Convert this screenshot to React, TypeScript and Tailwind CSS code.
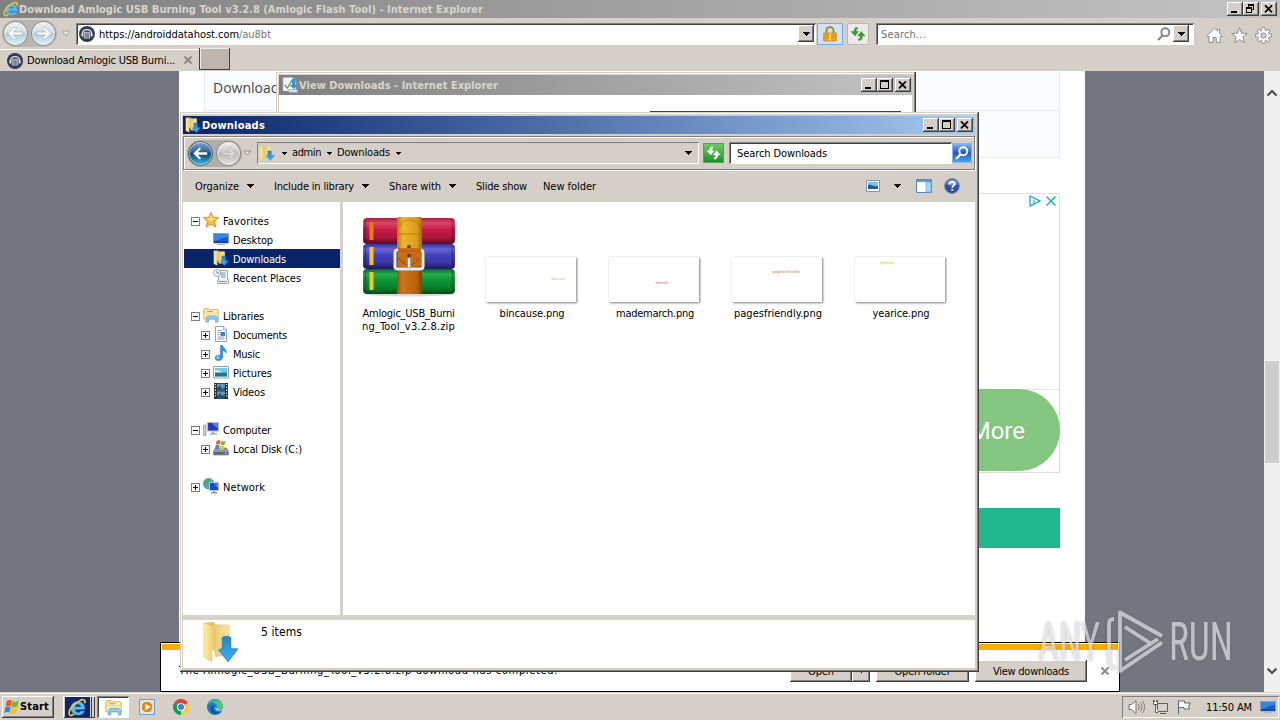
import { useLayoutEffect, useRef, useState, type ReactNode } from "react";

/* Sets a label to a known width by adjusting its tracking. */
function Label({ children, w, className = "" }: { children: string; w: number; className?: string }) {
  const ref = useRef<HTMLSpanElement>(null);
  const [spacing, setSpacing] = useState(0);
  useLayoutEffect(() => {
    const natural = ref.current!.getBoundingClientRect().width - spacing * children.length;
    setSpacing((w - natural) / children.length);
  }, [w, children]);
  return (
    <span className={`block shrink-0 ${className}`} style={{ width: w }}>
      <span ref={ref} className="inline-block whitespace-pre" style={{ letterSpacing: spacing }}>
        {children}
      </span>
    </span>
  );
}

const raised =
  "bg-[#d6cfc7] shadow-[inset_-1px_-1px_0_#404040,inset_1px_1px_0_#ffffff,inset_-2px_-2px_0_#808080]";
const sunken = "shadow-[inset_1px_1px_0_#808080,inset_-1px_-1px_0_#ffffff,inset_2px_2px_0_#404040]";

function Down({ className = "" }: { className?: string }) {
  return (
    <svg className={`shrink-0 ${className}`} width="7" height="4" viewBox="0 0 7 4" shapeRendering="crispEdges">
      <path d="M0 0h7v1H0zM1 1h5v1H1zM2 2h3v1H2zM3 3h1v1H3z" fill="#000" />
    </svg>
  );
}

function SmallDown({ className = "" }: { className?: string }) {
  return (
    <svg className={`shrink-0 ${className}`} width="5" height="3" viewBox="0 0 5 3" shapeRendering="crispEdges">
      <path d="M0 0h5v1H0zM1 1h3v1H1zM2 2h1v1H2z" fill="#000" />
    </svg>
  );
}

function WinButtons({ restore = false }: { restore?: boolean }) {
  return (
    <div className="flex shrink-0">
      <div className={`h-[14px] w-4 ${raised}`}>
        <svg width="16" height="14" shapeRendering="crispEdges"><path d="M4 9h6v2H4z" /></svg>
      </div>
      <div className={`h-[14px] w-4 ${raised}`}>
        <svg width="16" height="14" shapeRendering="crispEdges">
          {restore ? (
            <path fillRule="evenodd" d="M5 2h6v6H9v3H3V5h2zM6 4v1h3v2h1V4zM4 7v3h4V7z" />
          ) : (
            <path fillRule="evenodd" d="M3 2h9v9H3zM4 4v6h7V4z" />
          )}
        </svg>
      </div>
      <div className={`ml-[2px] h-[14px] w-4 ${raised}`}>
        <svg width="16" height="14"><path d="M4 3.300l7 7M11 3.300l-7 7" stroke="#000" strokeWidth="1.700" /></svg>
      </div>
    </div>
  );
}

function IeLogo({ size = 16 }: { size?: number }) {
  return (
    <svg className="shrink-0" width={size} height={size} viewBox="0 0 16 16">
      <path fillRule="evenodd" d="M14.200 9.700H6c.2 3 3.700 3.200 4.700 1.200h3.200C12.500 16.300 2.400 15.800 2.400 8.700 2.400.9 14.800.7 14.200 9.700zM6 7.300h4.700C10.400 4.600 6.300 4.600 6 7.300z" fill="#55bdf3" stroke="#2a86cf" strokeWidth=".3" />
      <path d="M14 4.400c.9-2.800-.8-3.900-4.400-1.900C4.500 4.500.4 10.200 1 13.400c.5 2.200 2.600 1.300 4.300.1" fill="none" stroke="#f2c530" strokeWidth="1.500" />
    </svg>
  );
}

function SiteLogo() {
  return (
    <svg className="shrink-0" width="16" height="16" viewBox="0 0 16 16">
      <circle cx="8" cy="8" r="8" fill="#343b50" />
      <path d="M3.500 9V7.500C3.500 2.300 12.500 2.300 12.500 7.500V9" fill="none" stroke="#dfe3ed" strokeWidth="1.200" />
      <path d="M2.400 7.300h1.800v3.200H2.400zM11.800 7.300h1.800v3.200h-1.800z" fill="#dfe3ed" />
      <path d="M5.300 6.300h5.400v5.700H5.300z" fill="none" stroke="#dfe3ed" strokeWidth=".9" />
      <path d="M6 8h4M6 10h4" stroke="#dfe3ed" strokeWidth=".9" />
    </svg>
  );
}

function DownloadFolder({ size = 16, h }: { size?: number; h?: number }) {
  return (
    <svg className="shrink-0" width={size} height={h ?? size} viewBox="0 0 16 16" preserveAspectRatio="none">
      <defs>
        <linearGradient id="fold" x1="0" x2="1"><stop stopColor="#fff0a0" /><stop offset="1" stopColor="#e8c668" /></linearGradient>
        <linearGradient id="back" x1="0" x2="1"><stop stopColor="#dcb95c" /><stop offset="1" stopColor="#f8e6a4" /></linearGradient>
        <linearGradient id="arr" x1="0" y1="0" x2="0" y2="1"><stop stopColor="#2d83c8" /><stop offset="1" stopColor="#35aef2" /></linearGradient>
      </defs>
      <path d="M1 .8L5.500.5v.9l6.300.1v11.500L6 13.500z" fill="url(#back)" stroke="#d7bd72" strokeWidth=".2" />
      <path d="M.8.600l4.800 2v7.200L4.300 11v4.500L.8 13.700z" fill="url(#fold)" stroke="#dbbd69" strokeWidth=".2" />
      <path d="M8.700 6.300c1-.7 2.700-.7 3.800 0v4.200l3.100.1-4.300 5-4.200-4.600 1.600-.6z" fill="url(#arr)" stroke="#2878b5" strokeWidth=".25" />
    </svg>
  );
}

function Library({ size = 16 }: { size?: number }) {
  return (
    <svg className="shrink-0" width={size} height={size} viewBox="0 0 16 16">
      <path d="M.6 2.500l1-1h4l1 1h8l.8 1v8.500H.6z" fill="#f3d977" stroke="#c59f3a" strokeWidth=".5" />
      <path d="M2 3.500h12v2H2z" fill="#fdf7d8" />
      <path d="M4 4h6v1H4z" fill="#77bd74" />
      <path d="M1.500 6.500H15l-.5 6h-13z" fill="#f9e9a5" />
      <path d="M3 15v-4l2-2h8l2 2v4h-2.500v-3H5.500v3z" fill="#8fcdf0" stroke="#4a94c6" strokeWidth=".6" />
    </svg>
  );
}

function Monitor() {
  return (
    <svg className="shrink-0" width="16" height="16" viewBox="0 0 16 16">
      <path d="M.5 2.500h15v9.500H.5z" fill="#1e5bc4" stroke="#7f9fc8" />
      <path d="M1 3h14v3C9 6 5 10 1 10z" fill="#3b83e2" />
      <path d="M1 10.500h14v1.300H1z" fill="#183a78" />
      <path d="M4 13h8v1.200H4z" fill="#aabccd" />
    </svg>
  );
}

function NavCircle({ kind }: { kind: "ie" | "blue" | "gray" }) {
  const left = kind !== "gray";
  return (
    <svg className="shrink-0" width="27" height="27" viewBox="0 0 27 27">
      <defs>
        <linearGradient id={`nav-${kind}`} x1="0" y1="0" x2="0" y2="1">
          <stop stopColor={kind === "blue" ? "#86a9c6" : "#f1f0ee"} />
          <stop offset=".45" stopColor={kind === "blue" ? "#27659b" : kind === "ie" ? "#d3dfe8" : "#cbc8c3"} />
          <stop offset=".5" stopColor={kind === "blue" ? "#0d4276" : kind === "ie" ? "#b7ccd9" : "#c0bdb8"} />
          <stop offset="1" stopColor={kind === "blue" ? "#35c3e9" : kind === "ie" ? "#d9f4fb" : "#e4e2df"} />
        </linearGradient>
      </defs>
      <circle cx="13.500" cy="13.500" r="12" fill={`url(#nav-${kind})`} stroke={kind === "blue" ? "#4e6274" : "#858585"} />
      <circle cx="13.500" cy="13.500" r="11" fill="none" stroke="#fff" strokeOpacity=".55" />
      {left ? (
        <path d="M6 13.500l6.500-6.500 1.900 1.900-3 3.100h9v3h-9l3 3.100-1.900 1.900z" fill="#fff" stroke={kind === "ie" ? "#87a4b8" : "#285b82"} strokeWidth=".6" />
      ) : (
        <path d="M20.500 13.500l-6-6-1.700 1.700 2.900 3H7.200v2.700h8.500l-2.900 3 1.700 1.700z" fill="#dedcd8" stroke="#aaa7a2" strokeWidth=".6" />
      )}
    </svg>
  );
}

function IeForward() {
  return <div className="-scale-x-100"><NavCircle kind="ie" /></div>;
}

function Magnifier({ color }: { color: string }) {
  return (
    <svg className="shrink-0" width="16" height="16" viewBox="0 0 16 16">
      <circle cx="9.300" cy="6.300" r="4" fill="none" stroke={color} strokeWidth="1.900" />
      <path d="M6.500 9.500L2 14" stroke={color} strokeWidth="2.300" />
    </svg>
  );
}

function RefreshArrows({ color, edge }: { color: string; edge: string }) {
  return (
    <svg width="20" height="18" viewBox="0 0 20 18" fill={color} stroke={edge} strokeWidth=".3">
      <path d="M9.500 2.500C7 2.300 5.800 4 5.900 6.500H3L7 11l3.700-4.500H8.200c0-1.700.3-2.200 1.300-2.500z" />
      <path d="M10.500 15.500c2.800.2 4-1.500 3.900-4.500h2.800L13.300 6.500 9.500 11h2.600c0 2-.4 2.700-1.600 3z" />
    </svg>
  );
}

function BrowserWindow() {
  return (
    <div className="absolute inset-x-0 top-0 flex h-[692px] flex-col bg-[#d6cfc7]">
      <div className="flex h-[18px] shrink-0 items-center bg-linear-to-r from-[#808080] to-[#c3c3c3] pl-[3px] pr-[3px]">
        <IeLogo />
        <Label w={464} className="mt-[1px] text-[11px] font-bold text-[#d8d4cc]">Download Amlogic USB Burning Tool v3.2.8 (Amlogic Flash Tool) - Internet Explorer</Label>
        <div className="ml-auto"><WinButtons restore /></div>
      </div>
      <div className="flex h-[31px] shrink-0 items-center pl-[2px]">
        <div className="flex h-[27px] rounded-full bg-[#b9b5b0]"><NavCircle kind="ie" /><div className="ml-[1px]"><IeForward /></div></div>
        <svg className="ml-1" width="10" height="7"><path d="M1 1h8L5 6z" fill="#e7e3de" stroke="#aaa59f" /></svg>
        <div className={`ml-[5px] flex h-[22px] w-[740px] items-center bg-white pl-[3px] pr-[2px] ${sunken}`}>
          <SiteLogo />
          <Label w={140} className="ml-[4px] mt-[2px] text-[11px] text-black">https://androiddatahost.com</Label>
          <Label w={32} className="mt-[2px] text-[11px] text-[#777]">/au8bt</Label>
          <div className={`ml-auto flex h-[17px] w-4 items-center justify-center ${raised}`}><Down /></div>
        </div>
        <div className="ml-[1px] flex h-[22px] w-[26px] items-center justify-center border border-[#78aee8] bg-[#cfe4fc]">
          <svg width="14" height="16" viewBox="0 0 14 16">
            <path d="M3.500 8V4.500C3.500 0 10.500 0 10.500 4.500V8" fill="none" stroke="#b47d12" strokeWidth="1.900" />
            <path d="M.7 7h12.600v8H.7z" fill="#edad20" stroke="#bc7e15" strokeWidth=".7" />
            <path d="M1 9.500h12M1 12h12" stroke="#c98a18" strokeWidth=".8" /><path d="M6.500 7.500h1.500v7H6.500z" fill="#ffd866" />
          </svg>
        </div>
        <div className="ml-1 flex h-[22px] w-[22px] items-center justify-center rounded-[2px] border border-[#bbb7b2] bg-[#eceae7]">
          <RefreshArrows color="#3c9b35" edge="#237321" />
        </div>
        <div className={`ml-[7px] flex h-[22px] w-[318px] items-center bg-white pl-[5px] pr-[5px] ${sunken}`}>
          <Label w={45} className="mt-[2px] text-[11px] text-[#707070]">Search...</Label>
          <div className="ml-auto mr-[1px]"><Magnifier color="#888" /></div>
          <div className={`flex h-[17px] w-4 items-center justify-center ${raised}`}><Down /></div>
        </div>
        <div className="ml-[12px] mt-[3px] flex gap-[7px]">
          <svg width="17" height="17" viewBox="0 0 17 17"><path d="M.8 8.800l7.700-7.500 2.800 2.700V2h2.200v4.200l2.700 2.600-1.200 1.200-.8-.8v6.300h-4v-5H7v5H3V9.200l-.8.8z" fill="#fff" stroke="#858585" strokeWidth=".9" /></svg>
          <svg className="ml-[1px]" width="17" height="17" viewBox="0 0 17 17"><path d="M8.500.8l2.100 5.400 5.700.3-4.400 3.600 1.500 5.600-4.900-3.100-4.900 3.100 1.500-5.600L.7 6.500l5.700-.3z" fill="#fff" stroke="#858585" strokeWidth=".9" /></svg>
          <svg width="17" height="17" viewBox="0 0 17 17">
            <g stroke="#858585" strokeWidth="3.600">
              <path d="M8.500.3v16.400M.3 8.500h16.400M2.700 2.700l11.600 11.600M14.300 2.700L2.700 14.300" />
            </g>
            <circle cx="8.500" cy="8.500" r="6.200" fill="#858585" />
            <path d="M8.500 1v15M1 8.500h15M3.200 3.200l10.600 10.600M13.800 3.200L3.200 13.800" stroke="#fff" strokeWidth="2.200" />
            <circle cx="8.500" cy="8.500" r="5.400" fill="#fff" />
            <circle cx="8.500" cy="8.500" r="2.600" fill="#d6cfc7" stroke="#858585" strokeWidth=".9" />
          </svg>
        </div>
      </div>
      <div className="flex h-[22px] shrink-0">
        <div className="flex w-[199px] items-center border-t border-white pl-[7px] pr-[6px]">
          <SiteLogo />
          <Label w={148} className="ml-[4px] text-[11px] text-black">Download Amlogic USB Burni...</Label>
          <svg className="-mt-[2px] ml-auto" width="10" height="10"><path d="M1.500 1.500l7 7M8.500 1.500l-7 7" stroke="#8d8781" strokeWidth="2" /></svg>
        </div>
        <div className="-mt-[1px] h-[22px] w-[31px] bg-[#bdb5ae] shadow-[inset_-1px_-1px_0_#404040,inset_1px_0_0_#404040,inset_2px_1px_0_#eee]" />
      </div>
      <div className="flex min-h-0 flex-1">
        <div className="flex flex-1 justify-center bg-[#727680]">
          <div className="flex h-full w-[906px] flex-col bg-white px-[25px]">
            <div className="h-[87px] border border-t-0 border-[#e6edf2] bg-[#fafdff]">
              <div className="h-[40px] border-b border-[#e6edf2] pl-2 pt-[5px] font-['Open_Sans'] text-[14px] leading-[24px] text-[#444] [font-stretch:100%]">Download</div>
            </div>
            <div className="mt-[35px] flex h-[280px] flex-col border border-[#dedede]">
              <div className="flex h-[195px] justify-end gap-[2px] pr-[1px]">
                <svg width="14" height="14" viewBox="0 0 14 14"><path d="M2 2l10 5-10 5z" fill="none" stroke="#14a8bd" strokeWidth="1.300" /><path d="M6 4.500v1M6 6.300v3.300" stroke="#14a8bd" strokeWidth="1.200" /></svg>
                <svg width="14" height="14" viewBox="0 0 14 14"><path d="M2.500 2.500l9 9M11.500 2.500l-9 9" stroke="#14a8bd" strokeWidth="1.400" /></svg>
              </div>
              <div className="-mr-[1px] flex h-[83px] justify-end border-t border-[#e6e6e6]">
                <div className="-mt-[1px] flex h-[82px] w-[400px] items-center justify-end rounded-full bg-[#84c67f] pr-[35px] pt-[2px] font-['Roboto',sans-serif] text-[24px] text-white [font-stretch:100%]">Learn More</div>
              </div>
            </div>
            <div className="mt-[35px] h-10 bg-[#21b78d]" />
          </div>
        </div>
        <div className="flex w-4 flex-col items-center bg-[#f0f0f0]">
          <svg className="mt-[17px]" width="12" height="9"><path d="M1.500 7.500L6 3l4.500 4.500" fill="none" stroke="#505050" strokeWidth="2.200" /></svg>
          <div className="mt-[264px] h-[102px] w-[14px] bg-[#cdcdcd]" />
          <svg className="mb-[16px] mt-auto" width="12" height="9"><path d="M1.500 1.500L6 6l4.500-4.500" fill="none" stroke="#505050" strokeWidth="2.200" /></svg>
        </div>
      </div>
    </div>
  );
}

function ViewDownloadsWindow() {
  return (
    <div className="absolute left-[276px] top-[72px] flex h-[60px] w-[640px] flex-col bg-[#d6cfc7] p-[3px] shadow-[inset_-1px_0_0_#404040,inset_-2px_0_0_#808080,inset_1px_1px_0_#d6cfc7,inset_2px_2px_0_#fff]">
      <div className="mr-[1px] flex h-5 shrink-0 items-center bg-linear-to-r from-[#808080] to-[#c3c3c3] pl-[3px] pr-[1px]">
        <svg width="16" height="16" viewBox="0 0 16 16">
          <path d="M1 .5h10l3 3V14H1z" fill="#f4f8f4" stroke="#a5b7b1" strokeWidth=".6" />
          <path d="M2.500 8l3 3L10 3" stroke="#5cab5c" fill="none" strokeWidth="1.500" />
          <path d="M10 1.500h3.500V8H16l-4.200 4L7.500 8H10z" fill="#3098df" /><path d="M7 12.500h8.500v3H7z" fill="#d2e5ef" stroke="#7197b0" strokeWidth=".5" />
        </svg>
        <Label w={199} className="ml-[1px] mt-[1px] text-[11px] font-bold text-[#d8d4cc]">View Downloads - Internet Explorer</Label>
        <div className="ml-auto"><WinButtons /></div>
      </div>
      <div className="mr-[1px] flex flex-1 justify-end bg-white pr-[11px] pt-[16px]"><div className="h-[2px] w-[251px] bg-[#404040]" /></div>
    </div>
  );
}

const Star = () => (
  <svg width="16" height="16" viewBox="0 0 16 16"><path d="M8 .2l2.200 5 5.500.5-4.200 3.700 1.400 5.700L8 12.300 3.100 15.100l1.400-5.700L.3 5.700l5.500-.5z" fill="#fbb93a" stroke="#dc7d21" strokeWidth=".8" /><path d="M8 2.500l1.400 3.700 4 .4L8 9.500 3 6.500l3.600-.3z" fill="#ffe08a" /></svg>
);
const Recent = () => (
  <svg width="16" height="16" viewBox="0 0 16 16"><path d="M5.500 1.500h9v9h1v4h-11v-3h1z" fill="#edf1f5" stroke="#8d959e" strokeWidth=".8" /><path d="M8 4h4.500M8 6h4.500M8 8h4.500M6 12.500h8" stroke="#6e8eac" strokeWidth=".9" /><circle cx="4.200" cy="4" r="3.500" fill="#fafafa" stroke="#8b929a" strokeWidth=".8" /><path d="M4 2v2.200h2" fill="none" stroke="#4e6781" strokeWidth=".8" /></svg>
);
const Doc = () => (
  <svg width="16" height="16" viewBox="0 0 16 16"><path d="M2.500.5h8L13.500 4v11.500h-11z" fill="#fdfefe" stroke="#7f9cb5" strokeWidth=".9" /><path d="M10.500.5V4h3" fill="#cfe0ee" stroke="#7f9cb5" strokeWidth=".7" /><path d="M4.500 4.500h4M4.500 6.500h2M4.500 8.500h2M4.500 11h7M4.500 13h7" stroke="#7896b0" strokeWidth=".9" /><path d="M7.500 6h4.500v4H7.500z" fill="#3e80b1" /></svg>
);
const Music = () => (
  <svg width="16" height="16" viewBox="0 0 16 16"><path d="M7.500.3h2c.4 2.600 4.600 3.700 3.600 8-.5-1.700-1.800-2.600-3.400-2.900V12c0 2.200-1.900 3.600-4 3.600-2.200 0-3.600-1-3.600-2.600 0-2.100 2.900-3.300 5.400-2.500z" fill="#2d98e2" stroke="#1a68ae" strokeWidth=".5" /><circle cx="5" cy="12.500" r="1.500" fill="#8ed3fa" /></svg>
);
const Pic = () => (
  <svg width="16" height="16" viewBox="0 0 16 16"><path d="M.5 2.500h15v11.500H.5z" fill="#fff" stroke="#8ba7b8" /><path d="M2 4h12v8.500H2z" fill="#79c8ec" /><path d="M2 8c3-1 6 1.500 12 .5v4H2z" fill="#237486" /><path d="M2 7c3-2 5 0 7 1.500H2z" fill="#e4f5fb" /></svg>
);
const Video = () => (
  <svg width="16" height="16" viewBox="0 0 16 16"><path d="M1 0h14v16H1z" fill="#252f38" /><path d="M4 .7h8v6.800H4zM4 8.500h8v6.800H4z" fill="#5e9bc4" /><path d="M4 5l3-3 2 4 3-2v3.500H4zM4 13l3-3 2 3 3-2v4.300H4z" fill="#26506f" /><path d="M2.400 1v14M13.600 1v14" stroke="#e8eef2" strokeWidth="1.200" strokeDasharray="1.300 1.500" /></svg>
);
const Pc = () => (
  <svg width="16" height="16" viewBox="0 0 16 16"><path d="M.5 4h2.500v10.500H.5z" fill="#cdd2d7" stroke="#8b9197" strokeWidth=".7" /><path d="M4.500 1.500h11v8.500h-11z" fill="#2138c4" stroke="#b3c1d6" strokeWidth="1.200" /><path d="M9 2h6v5C12 6 10 4 9 2z" fill="#5578ea" /><path d="M9 10.500h2.500v1.700H14v1.500H7v-1.500h2z" fill="#a5afb9" /></svg>
);
const Disk = () => (
  <svg width="16" height="16" viewBox="0 0 16 16"><path d="M2.500 8h11l2 3.500v3.500H.5v-3.500z" fill="#8b9aa5" stroke="#596976" strokeWidth=".6" /><path d="M1 12h14v2.500H1z" fill="#536878" /><path d="M12 12.500h2v1.300h-2z" fill="#70df60" /><path d="M3.500 1c1.500-1 2.500-.9 3.900-.3L6.700 4.500c-1.500-.6-2.500-.5-3.900.3z" fill="#e35c2d" /><path d="M8.200 1c1.500.6 2.500.5 4.300-.3l-.8 3.800c-1.500.9-2.600.8-4.300.3z" fill="#78b937" /><path d="M2.600 5.500c1.300-.8 2.400-.8 3.900-.3L5.800 9c-1.400-.6-2.300-.5-3.900.3z" fill="#4a86d2" /><path d="M7.200 5.500c1.500.6 2.500.5 4.300-.3l-.8 3.800c-1.500.9-2.600.8-4.300.3z" fill="#f3c332" /></svg>
);
const Net = () => (
  <svg width="16" height="16" viewBox="0 0 16 16"><circle cx="5.700" cy="5.700" r="5.300" fill="#45aed0" stroke="#277f9f" strokeWidth=".6" /><path d="M2 2.500C4 0 7 .8 7.500 2L5 4.500 4 7 1.500 6zM5 8l3-1v3l-2 1z" fill="#4fac50" /><path d="M6.500 4.500h9v8h-9z" fill="#2046cd" stroke="#b6c3d8" /><path d="M11 5h4v4.500c-2-.5-3.500-2-4-4.500z" fill="#567aeb" /><path d="M10 13h2v1h2v1.500H8V14h2z" fill="#8997a6" /></svg>
);

function Expander({ open }: { open: boolean }) {
  return (
    <svg className="mt-[1px] shrink-0" width="9" height="9" shapeRendering="crispEdges"><path d="M.5.5h8v8h-8z" fill="#fff" stroke="#808080" /><path d={open ? "M2 4h5v1H2z" : "M2 4h5v1H2zM4 2h1v5H4z"} /></svg>
  );
}

function TreeRow({ icon, text, w, level, open, selected }: { icon: ReactNode; text: string; w: number; level: 0 | 1; open?: boolean; selected?: boolean }) {
  return (
    <div className={`flex h-[19px] items-center ${level ? "pl-[17px]" : "pl-[7px]"} ${selected ? "bg-[#0a246a] text-white" : "text-black"}`}>
      <div className="w-[9px]">{open !== undefined && <Expander open={open} />}</div>
      <div className="-mt-[1px] ml-[3px] w-4">{icon}</div>
      <Label w={w} className="ml-[4px] mt-[2px] text-[11px]">{text}</Label>
    </div>
  );
}

function RarIcon() {
  return (
    <svg width="94" height="82" viewBox="0 0 94 82">
      <defs>
        <linearGradient id="red" x1="0" y1="0" x2="0" y2="1"><stop stopColor="#a8203e" /><stop offset=".2" stopColor="#dc4468" /><stop offset=".45" stopColor="#c41d45" /><stop offset=".75" stopColor="#b0143c" /><stop offset="1" stopColor="#5c0a20" /></linearGradient>
        <linearGradient id="blu" x1="0" y1="0" x2="0" y2="1"><stop stopColor="#33308c" /><stop offset=".2" stopColor="#6a66d8" /><stop offset=".45" stopColor="#4542bb" /><stop offset=".75" stopColor="#3835a4" /><stop offset="1" stopColor="#1c1a58" /></linearGradient>
        <linearGradient id="grn" x1="0" y1="0" x2="0" y2="1"><stop stopColor="#08642a" /><stop offset=".2" stopColor="#27ae4c" /><stop offset=".45" stopColor="#0d9435" /><stop offset=".75" stopColor="#08812c" /><stop offset="1" stopColor="#034916" /></linearGradient>
        <linearGradient id="strap" x1="0" x2="1"><stop stopColor="#9c4f0b" /><stop offset=".2" stopColor="#cf741f" /><stop offset=".8" stopColor="#b9600f" /><stop offset="1" stopColor="#823c06" /></linearGradient>
        <linearGradient id="gold" x1="0" x2="1"><stop stopColor="#b97d10" /><stop offset=".25" stopColor="#eeb42c" /><stop offset=".8" stopColor="#dc9c1e" /><stop offset="1" stopColor="#a66a0c" /></linearGradient>
      </defs>
      <ellipse cx="47" cy="78" rx="44" ry="2.500" fill="#000" opacity=".15" />
      <rect x="1" y="2" width="92" height="26" rx="4" fill="url(#red)" />
      <rect x="1" y="28" width="92" height="25" rx="4" fill="url(#blu)" />
      <rect x="1" y="53" width="92" height="25" rx="4" fill="url(#grn)" />
      <path d="M3.500 4v22M90.500 4v22M3.500 30v21M90.500 30v21M3.500 55v21M90.500 55v21" stroke="#000" strokeOpacity=".25" strokeWidth="2" />
      <path d="M7.500 6h4v18h-4z" fill="#e57b1d" /><path d="M7.500 31h4v18h-4zM7.500 56h4v18h-4z" fill="#f4c71e" />
      <path d="M35 2l2-1h21l2 1v76H35z" fill="url(#strap)" />
      <path d="M35 2l2-1h21l2 1v31l-4 4H39l-4-4z" fill="url(#gold)" />
      <path d="M38 10c2-8 17-8 19 0M36 18h23" fill="none" stroke="#a9750f" strokeWidth=".8" />
      <circle cx="47" cy="31" r="1.900" fill="#6b3504" />
      <rect x="33" y="34" width="28" height="19" rx="2.500" fill="none" stroke="#8b8f95" strokeWidth="3.600" />
      <rect x="33" y="34" width="28" height="19" rx="2.500" fill="none" stroke="#eceef0" strokeWidth="2.400" />
      <path d="M36 32h23v18H36z" fill="#c86d16" /><path d="M37 42c3 5 7 7 10 7s7-2 10-7" fill="none" stroke="#8b430a" strokeWidth="1" />
      <path d="M36 35h23" stroke="#a35a12" strokeWidth=".7" />
      <circle cx="47" cy="39.500" r="1.800" fill="#6b3504" />
      <path d="M45.500 42h3v10h-3z" fill="#f0f0f0" stroke="#85898e" strokeWidth=".7" />
    </svg>
  );
}

function Thumb({ name, w, children }: { name: string; w: number; children: ReactNode }) {
  return (
    <div className="flex w-[123px] flex-col items-center pt-[55px]">
      <div className="mr-[2px] h-[45px] w-[90px] bg-white shadow-[0_0_1px_#ccc,1px_1px_2px_#777]">{children}</div>
      <Label w={w} className="ml-[1px] mt-[5px] text-[11px] leading-[13px] text-black">{name}</Label>
    </div>
  );
}

const tiny = "block text-[4px] font-bold leading-[4px]";

function ExplorerWindow() {
  return (
    <div className="absolute left-[180px] top-[112px] flex h-[560px] w-[799px] flex-col bg-[#d6cfc7] p-[3px] pt-1 shadow-[inset_-1px_-1px_0_#404040,inset_1px_1px_0_#d6cfc7,inset_-2px_-2px_0_#808080,inset_2px_2px_0_#fff]">
      <div className="mr-[1px] flex h-[18px] shrink-0 items-center bg-linear-to-r from-[#0a246a] to-[#a6caf0] pl-[2px] pr-[2px]">
        <DownloadFolder />
        <Label w={63} className="ml-[1px] mt-[1px] text-[11px] font-bold text-white">Downloads</Label>
        <div className="ml-auto"><WinButtons /></div>
      </div>
      <div className="mr-[1px] mt-[2px] flex h-[34px] shrink-0 items-center border border-[#808080] pl-[3px] shadow-[inset_1px_1px_0_#fff,1px_1px_0_#fff]">
        <div className="flex rounded-full bg-[#b0aca6]"><NavCircle kind="blue" /><div className="ml-[1px]"><NavCircle kind="gray" /></div></div>
        <svg className="ml-[1px]" width="9" height="6"><path d="M1 1h7L4.500 5z" fill="#f3f0ec" stroke="#77736e" strokeWidth=".8" /></svg>
        <div className="ml-[5px] flex h-[22px] w-[442px] items-center pl-[2px] pr-[7px] shadow-[inset_1px_1px_0_#808080,inset_-1px_-1px_0_#fff]">
          <DownloadFolder />
          <SmallDown className="ml-[7px]" />
          <Label w={29} className="ml-[5px] text-[11px] text-black">admin</Label>
          <SmallDown className="ml-[6px]" />
          <Label w={53} className="ml-[5px] text-[11px] text-black">Downloads</Label>
          <SmallDown className="ml-[6px]" />
          <Down className="ml-auto" />
        </div>
        <div className="ml-[4px] flex h-5 w-[21px] items-center justify-center border border-[#5c9f5c] bg-linear-to-b from-[#6dca62] to-[#149323]"><RefreshArrows color="#fff" edge="#fff" /></div>
        <div className={`ml-[5px] flex h-[22px] w-[223px] items-center bg-white pl-2 ${sunken}`}>
          <Label w={90} className="mt-[1px] text-[11px] text-black">Search Downloads</Label>
        </div>
        <div className="flex h-5 w-5 items-center justify-center border border-[#8db6e6] bg-linear-to-b from-[#82b5f1] via-[#2455bd] to-[#4aa7ea]"><Magnifier color="#fff" /></div>
      </div>
      <div className="flex h-[32px] shrink-0 items-center pl-3 pr-4 text-[11px] text-black">
        <Label w={44} className="mt-[2px]">Organize</Label><Down className="ml-2" />
        <Label w={80} className="ml-5 mt-[2px]">Include in library</Label><Down className="ml-2" />
        <Label w={52} className="ml-5 mt-[2px]">Share with</Label><Down className="ml-2" />
        <Label w={51} className="ml-5 mt-[2px]">Slide show</Label>
        <Label w={53} className="ml-4 mt-[2px]">New folder</Label>
        <svg className="ml-auto" width="14" height="12" viewBox="0 0 14 12"><path d="M.5.5h13v11H.5z" fill="#fff" stroke="#8198b0" /><path d="M2 2h10v7H2z" fill="#7fc6ed" /><path d="M2 5c4-1 6 2 10 1v3H2z" fill="#225a91" /></svg>
        <Down className="ml-[14px]" />
        <svg className="ml-[15px]" width="16" height="14" viewBox="0 0 16 14"><path d="M.5.5h15v13H.5z" fill="#fff" stroke="#5987b8" /><path d="M1 1h14v2H1z" fill="#5c9ad2" /><path d="M10 3h5v10h-5z" fill="#a5dcf5" stroke="#68a8d1" strokeWidth=".7" /></svg>
        <svg className="ml-3" width="16" height="16" viewBox="0 0 16 16"><circle cx="8" cy="8" r="7.500" fill="#2c51ad" stroke="#8795af" /><path d="M2 6a6.300 6.300 0 0 1 12 0C11 8 5 8 2 6z" fill="#7890d2" /><path d="M5.700 6.200c0-3.200 4.900-3.200 4.900-.3 0 1.900-2.300 1.800-2.300 3.800M8.300 11v1.800" fill="none" stroke="#fff" strokeWidth="1.800" /></svg>
      </div>
      <div className="mr-[1px] flex h-[413px] shrink-0 bg-white">
        <div className="flex w-[157px] flex-col pl-[1px] pt-[9px]">
          <TreeRow level={0} open icon={<Star />} text="Favorites" w={46} />
          <TreeRow level={1} icon={<Monitor />} text="Desktop" w={40} />
          <TreeRow level={1} selected icon={<DownloadFolder />} text="Downloads" w={53} />
          <TreeRow level={1} icon={<Recent />} text="Recent Places" w={68} />
          <div className="h-[19px]" />
          <TreeRow level={0} open icon={<Library />} text="Libraries" w={41} />
          <TreeRow level={1} open={false} icon={<Doc />} text="Documents" w={54} />
          <TreeRow level={1} open={false} icon={<Music />} text="Music" w={27} />
          <TreeRow level={1} open={false} icon={<Pic />} text="Pictures" w={39} />
          <TreeRow level={1} open={false} icon={<Video />} text="Videos" w={32} />
          <div className="h-[19px]" />
          <TreeRow level={0} open icon={<Pc />} text="Computer" w={48} />
          <TreeRow level={1} open={false} icon={<Disk />} text="Local Disk (C:)" w={69} />
          <div className="h-[19px]" />
          <TreeRow level={0} open={false} icon={<Net />} text="Network" w={42} />
        </div>
        <div className="w-[3px] bg-[#d6d3ce]" />
        <div className="flex flex-1 items-start pl-[4px]">
          <div className="flex w-[123px] flex-col items-center pt-[14px]">
            <RarIcon />
            <Label w={92} className="mt-[9px] text-[11px] leading-[13px] text-black">Amlogic_USB_Burni</Label>
            <Label w={93} className="text-[11px] leading-[13px] text-black">ng_Tool_v3.2.8.zip</Label>
          </div>
          <Thumb name="bincause.png" w={65}><span className={`${tiny} pl-[66px] pt-[20px] text-[#dfe08e]`}>bincau</span></Thumb>
          <Thumb name="mademarch.png" w={78}><span className={`${tiny} pl-[47px] pt-[24px] text-[#e2a0aa]`}>march</span></Thumb>
          <Thumb name="pagesfriendly.png" w={88}><span className={`${tiny} pl-[41px] pt-[13px] text-[#eda9a0]`}>pagesfriendly</span></Thumb>
          <Thumb name="yearice.png" w={57}><span className={`${tiny} pl-[25px] pt-[4px] text-[#c8ec4a]`}>yearice</span></Thumb>
        </div>
      </div>
      <div className="h-[5px] shrink-0 bg-[#d6d3c9]" />
      <div className="mr-[1px] flex h-[48px] shrink-0 bg-white pl-[19px]">
        <div className="mt-[1px]"><DownloadFolder size={37} h={42} /></div>
        <Label w={41} className="ml-[22px] mt-[5px] text-[12px] text-black">5 items</Label>
      </div>
    </div>
  );
}

function DownloadBar() {
  return (
    <div className="absolute left-[160px] top-[642px] h-[50px] w-[960px] border border-black bg-white p-[1px]">
      <div className="h-[6px] bg-[#f7ae00]" />
      <div className="flex pl-[17px] pt-[10px] text-[11px] text-black">
        <Label w={379} className="mt-[4px]">The Amlogic_USB_Burning_Tool_v3.2.8.zip download has completed.</Label>
        <div className={`ml-[232px] flex h-[22px] w-[62px] items-center justify-center pt-[1px] ${raised}`}><Label w={26}>Open</Label></div>
        <div className={`flex h-[22px] w-[18px] items-center justify-center ${raised}`}><SmallDown /></div>
        <div className={`ml-[6px] flex h-[22px] w-[93px] items-center justify-center pt-[1px] ${raised}`}><Label w={56}>Open folder</Label></div>
        <div className={`ml-[6px] flex h-[22px] w-[112px] items-center justify-center pt-[1px] ${raised}`}><Label w={76}>View downloads</Label></div>
        <svg className="ml-[13px] mt-[6px]" width="10" height="10"><path d="M1.500 1.500l7 7M8.500 1.500l-7 7" stroke="#888" strokeWidth="1.900" /></svg>
      </div>
    </div>
  );
}

function Watermark() {
  return (
    <svg className="absolute left-[1030px] top-[604px]" width="250" height="88" viewBox="0 0 250 88" opacity=".72">
      <defs><filter id="soft" x="-10%" y="-10%" width="120%" height="120%"><feDropShadow dx="0" dy="0" stdDeviation="1.600" floodColor="#555a64" floodOpacity=".6" /></filter></defs>
      <g filter="url(#soft)" fill="#dcdee2" fontFamily="Roboto" fontWeight="400">
        <text x="8" y="55.500" fontSize="53" textLength="62" lengthAdjust="spacingAndGlyphs">ANY</text>
        <text x="139" y="55.500" fontSize="53" textLength="64" lengthAdjust="spacingAndGlyphs">RUN</text>
        <g fill="none" stroke="#dcdee2" strokeWidth="3.800" strokeLinejoin="round">
          <path d="M84 15c-4 0-5 2-5 5v37c0 4 2 7 6 7" />
          <path d="M95 23l25 16M90 21V8.500L132 32M90 21v46l42-28.500M95 56l33-21" />
        </g>
      </g>
    </svg>
  );
}

function Taskbar() {
  return (
    <div className="absolute inset-x-0 bottom-0 flex h-7 items-center bg-[#d6cfc7] pl-[2px] pr-[1px] pt-[2px] shadow-[inset_0_1px_0_#d6cfc7,inset_0_2px_0_#fff]">
      <div className={`flex h-[22px] w-[52px] items-center pl-[2px] ${raised}`}>
        <svg className="shrink-0" width="16" height="16" viewBox="0 0 17 16"><path d="M3 1.500c2-1.400 3.500-1.300 5.500-.3L7.200 7.200C5.300 6.400 4 6.400 1.700 7.600z" fill="#e65a2b" /><path d="M9 1.800c2 1 4 1 6.700-.6L14.300 7.200c-2 1.400-4 1.400-6.500.5z" fill="#75b936" /><path d="M1.500 8.300c1.700-1.200 3.400-1.200 5.500-.4L5.700 13.900c-1.900-.7-3.400-.7-5.500.4z" fill="#3d7ed0" /><path d="M7.600 8.400c2 1 4 1 6.500-.4l-1.300 6c-2 1.400-4.200 1.400-6.500.4z" fill="#f5c12d" /></svg>
        <Label w={29} className="text-[11px] font-bold text-black">Start</Label>
      </div>
      <div className="ml-[9px] flex h-[22px] w-[32px] shadow-[inset_1px_1px_0_#fff,inset_-1px_-1px_0_#404040,inset_-3px_0_0_#d6cfc7,inset_-4px_0_0_#404040]">
        <div className="ml-[2px] mt-[1px] flex h-5 w-[25px] items-center justify-center bg-[#0e2767]"><IeLogo size={19} /></div>
      </div>
      <div className={`ml-[2px] flex h-[22px] w-[32px] items-center justify-center bg-white ${sunken}`}><Library size={17} /></div>
      <svg className="ml-[10px]" width="16" height="16" viewBox="0 0 16 16"><path d="M.5.5h15v15H.5z" fill="#cfe4f6" stroke="#6b9fd0" /><circle cx="8" cy="8" r="6" fill="#f18518" stroke="#fff" /><path d="M6.300 4.700v6.600L11.500 8z" fill="#fff" /></svg>
      <svg className="ml-[18px]" width="16" height="16" viewBox="0 0 16 16"><path d="M8 8L1.070 4A8 8 0 0 1 14.930 4z" fill="#dc4437" /><path d="M8 8L1.070 4A8 8 0 0 0 8 16z" fill="#169b57" /><path d="M8 8L8 16A8 8 0 0 0 14.930 4z" fill="#fccc3e" /><circle cx="8" cy="8" r="4" fill="#fff" /><circle cx="8" cy="8" r="3" fill="#3e7ee8" /></svg>
      <svg className="ml-[18px]" width="16" height="16" viewBox="0 0 16 16">
        <defs><linearGradient id="edge" x1="0" x2="1"><stop stopColor="#249dd7" /><stop offset="1" stopColor="#58d063" /></linearGradient></defs>
        <circle cx="8" cy="8" r="8" fill="#167cc4" /><path d="M.2 7.500C1-.5 12-2.500 15.500 5c1 3-.5 5-3 5.300-1.500.2-3.500-.3-2.500-1.500C11 6 4-.5.2 7.500z" fill="url(#edge)" /><path d="M7 7c-3 4 2 8 7 5.800C9 17.500 2.500 14 4 8.500 5 6 7 6 7 7z" fill="#0d4e9c" /><path d="M8 8c0 4 4 4.500 8 3l.5-3c-1 3-5 3-6.500 1.500z" fill="#d6cfc7" />
      </svg>
      <div className="ml-auto flex h-[22px] w-[157px] items-center pl-[6px] pr-[3px] shadow-[inset_1px_1px_0_#808080,inset_-1px_-1px_0_#fff]">
        <svg width="17" height="16" viewBox="0 0 17 16" fill="none" stroke="#71706e"><path d="M1 5.500h2.500L8 1.500v13l-4.500-4H1z" fill="#fff" /><path d="M10.200 5c1.400 2 1.400 4 0 6M12.300 3.500c2.300 3 2.300 6 0 9M14.300 2c3.300 4 3.300 8 0 12" strokeWidth=".9" /></svg>
        <svg className="ml-[7px]" width="17" height="16" viewBox="0 0 17 16" fill="#fff" stroke="#5f5e5c"><path d="M5.500 4.500h10v8h-10z" fill="#d6d3cf" /><path d="M8 14.500h6M1.500 1v4.500h4V1M3.500 5.500v8H6M2.500 1v2M4.500 1v2" /></svg>
        <svg className="ml-[7px]" width="16" height="16" viewBox="0 0 16 16" fill="#fff" stroke="#686765"><path d="M2.500 15V1.500M2.500 2h6v2h6l-2 3 1 3H8V8.500H2.500" /></svg>
        <Label w={46} className="ml-[14px] mt-[1px] text-[11px] text-black">11:50 AM</Label>
        <div className="ml-auto"><Monitor /></div>
      </div>
    </div>
  );
}

export default function App() {
  return (
    <div className="relative h-[720px] w-[1280px] overflow-hidden bg-[#727680] font-['DejaVu_Sans_Condensed','DejaVu_Sans',sans-serif] leading-[14px] [font-stretch:75%]">
      <BrowserWindow />
      <ViewDownloadsWindow />
      <DownloadBar />
      <ExplorerWindow />
      <Taskbar />
      <Watermark />
    </div>
  );
}
